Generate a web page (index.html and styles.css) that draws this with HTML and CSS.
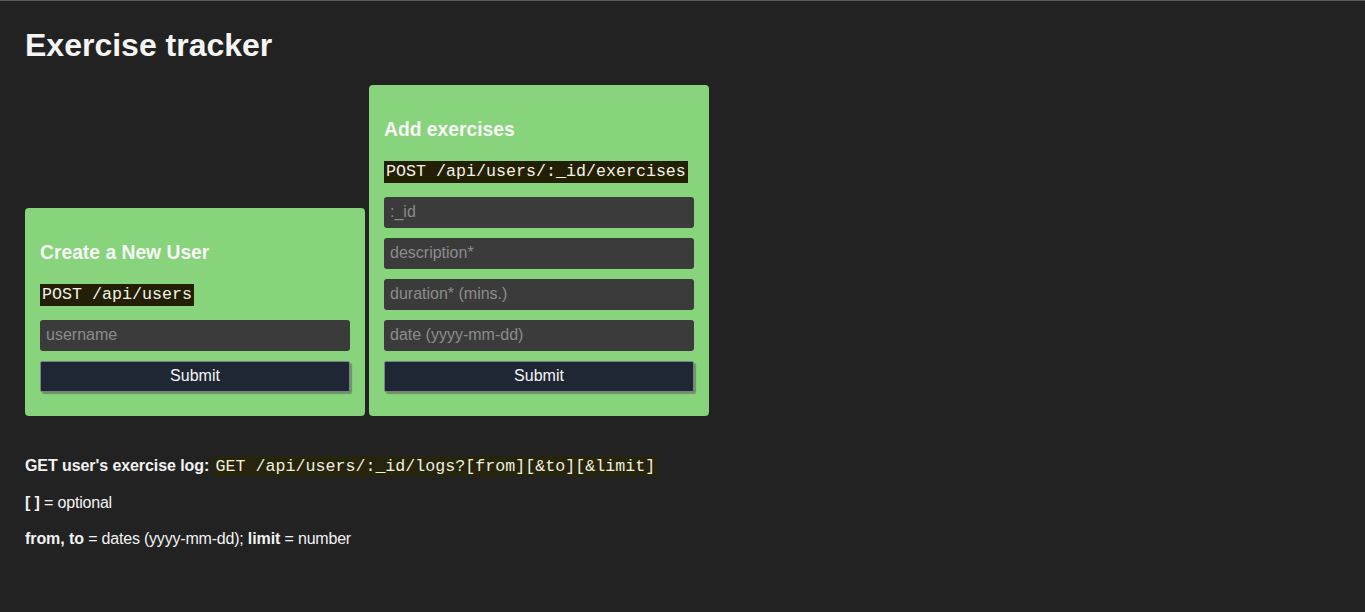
FILE: index.html
```html
<!DOCTYPE html>
<html lang="en">
<head>
<meta charset="utf-8">
<title>Exercise Tracker</title>
<link rel="stylesheet" href="styles.css">
</head>
<body>
<h1 class="title">Exercise tracker</h1>
<div class="cards">
  <form class="card">
    <h3 class="card-title">Create a New User</h3>
    <code class="endpoint">POST /api/users</code>
    <input class="field" type="text" placeholder="username">
    <button class="submit" type="button">Submit</button>
  </form>
  <form class="card">
    <h3 class="card-title">Add exercises</h3>
    <code class="endpoint">POST /api/users/:_id/exercises</code>
    <input class="field" type="text" placeholder=":_id">
    <input class="field" type="text" placeholder="description*">
    <input class="field" type="text" placeholder="duration* (mins.)">
    <input class="field" type="text" placeholder="date (yyyy-mm-dd)">
    <button class="submit" type="button">Submit</button>
  </form>
</div>
<p class="note"><strong>GET user's exercise log:</strong> <code class="inline-code">GET /api/users/:_id/logs?[from][&amp;to][&amp;limit]</code></p>
<p class="note"><strong>[ ]</strong> = optional</p>
<p class="note"><strong>from, to</strong> = dates (yyyy-mm-dd); <strong>limit</strong> = number</p>
</body>
</html>
```
FILE: styles.css
```css
html, body {
  background: #222222;
}
body {
  margin: 0;
  padding: 0 25px;
  border-top: 1px solid #5a5a5a;
  color: #f2f2f2;
  font-family: "Liberation Sans", Arial, sans-serif;
  font-size: 16px;
  min-height: 611px;
  box-sizing: border-box;
}
.title {
  font-size: 32px;
  font-weight: bold;
  margin: 26px 0 21px;
  line-height: 37px;
  color: #f5f5f5;
}
.cards {
  display: flex;
  align-items: flex-end;
  gap: 4px;
  margin-bottom: 40px;
}
.card {
  width: 340px;
  box-sizing: border-box;
  background: #88d47c;
  border-radius: 4px;
  padding: 15px 15px 24.6px;
  display: flex;
  flex-direction: column;
  align-items: flex-start;
}
.card-title {
  font-size: 19.3px;
  line-height: 22px;
  margin: 19.2px 0 19.6px;
  color: #f7f7f7;
}
.endpoint {
  display: block;
  background: #221f04;
  color: #f2f2e6;
  font-family: "Liberation Mono", "Courier New", monospace;
  font-size: 16.67px;
  line-height: 22px;
  padding: 0 2px;
  margin-bottom: 14px;
}
.field {
  width: 310px;
  height: 31px;
  box-sizing: border-box;
  margin: 0 0 10px;
  border: none;
  border-radius: 3px;
  background: #3b3b3b;
  color: #eeeeee;
  font-family: "Liberation Sans", Arial, sans-serif;
  font-size: 16px;
  padding: 0 6px;
  outline: none;
}
.field::placeholder {
  color: #8c8c8c;
}
.submit {
  width: 310px;
  height: 31px;
  box-sizing: border-box;
  background: #1e2733;
  color: #f5f5f5;
  border: 1px solid #7d8087;
  border-radius: 2px;
  box-shadow: 2px 2px 1px rgba(90, 90, 90, 0.55);
  font-family: "Liberation Sans", Arial, sans-serif;
  font-size: 16px;
  padding: 0;
}
.note {
  margin: 16px 0;
  line-height: 20px;
  color: #f2f2f2;
  letter-spacing: -0.2px;
}
.note strong {
  letter-spacing: -0.08px;
}
.inline-code {
  background: #26240d;
  color: #eeeedd;
  font-family: "Liberation Mono", "Courier New", monospace;
  font-size: 16.67px;
  line-height: 20px;
  letter-spacing: 0;
  padding: 1px 2px;
}
```
